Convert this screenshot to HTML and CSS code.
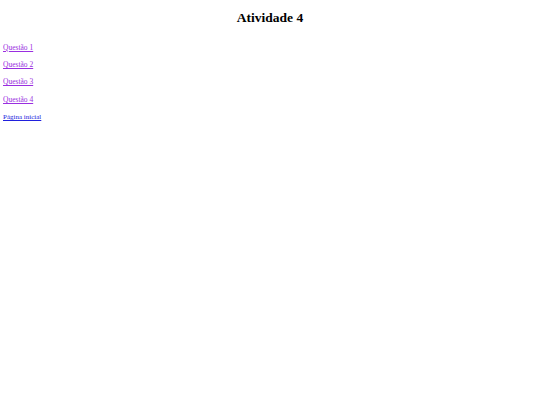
FILE: index.html
```html
<!DOCTYPE html>
<html lang="pt-BR">
<head>
<meta charset="utf-8">
<title>Atividade 4</title>
<link rel="stylesheet" href="styles.css">
</head>
<body>
<h1 class="title">Atividade 4</h1>
<p class="item"><a class="visited" href="#q1">Questão 1</a></p>
<p class="item"><a class="visited" href="#q2">Questão 2</a></p>
<p class="item"><a class="visited" href="#q3">Questão 3</a></p>
<p class="item"><a class="visited" href="#q4">Questão 4</a></p>
<a class="home" href="#inicio">Página inicial</a>
</body>
</html>
```

FILE: styles.css
```css
body {
  margin: 4px 3px;
  font-family: "Liberation Serif", "Times New Roman", serif;
  font-size: 7.5px;
  background: #fff;
  color: #000;
}
.title {
  text-align: center;
  font-size: 13.5px;
  font-weight: bold;
  margin: 5.7px 0 17px;
}
.item {
  margin: 8.4px 0;
}
.visited {
  color: #9a2ee0;
}
.home {
  font-size: 7px;
  color: #2020dd;
}
```
